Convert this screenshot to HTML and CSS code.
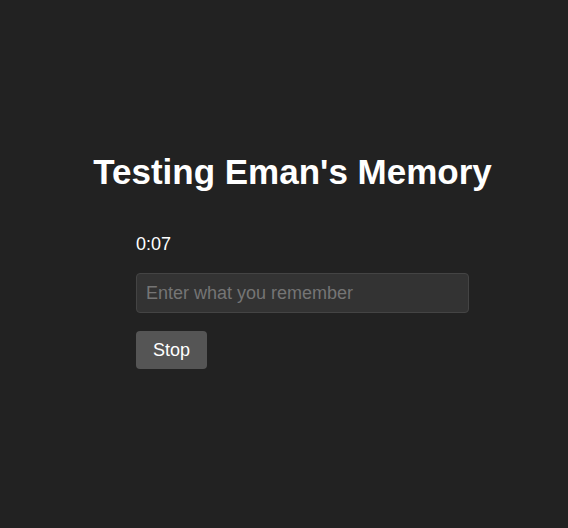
FILE: index.html
```html
<!DOCTYPE html>
<html>
<head>
<meta charset="utf-8">
<link rel="stylesheet" href="styles.css">
</head>
<body>
<main class="page">
  <h1 class="title">Testing Eman's Memory</h1>
  <section class="game">
    <div class="timer">0:07</div>
    <input class="answer" type="text" placeholder="Enter what you remember">
    <div><button class="stop">Stop</button></div>
  </section>
</main>
</body>
</html>
```
FILE: styles.css
```css
html, body {
  margin: 0;
  padding: 0;
  background: #222222;
  height: 100%;
}
body {
  font-family: "Liberation Sans", Arial, sans-serif;
  color: #ffffff;
}
.page {
  padding: 152px 0 0 17px;
}
.title {
  margin: 0;
  font-size: 35px;
  line-height: 40px;
  font-weight: bold;
  text-align: center;
}
.game {
  margin: 42px 0 0 119px;
  width: 333px;
  display: flex;
  flex-direction: column;
  gap: 18px;
}
.timer {
  font-size: 18px;
  line-height: 21px;
}
.answer {
  box-sizing: border-box;
  width: 333px;
  height: 40px;
  margin: 0;
  padding: 0 9px;
  background: #333333;
  border: 1px solid #444444;
  border-radius: 4px;
  color: #ffffff;
  font-family: "Liberation Sans", Arial, sans-serif;
  font-size: 18px;
  outline: none;
}
.answer::placeholder {
  color: #757575;
}
.stop {
  box-sizing: border-box;
  height: 38px;
  padding: 0 17px;
  background: #555555;
  border: none;
  border-radius: 4px;
  color: #ffffff;
  font-family: "Liberation Sans", Arial, sans-serif;
  font-size: 18px;
}
```
